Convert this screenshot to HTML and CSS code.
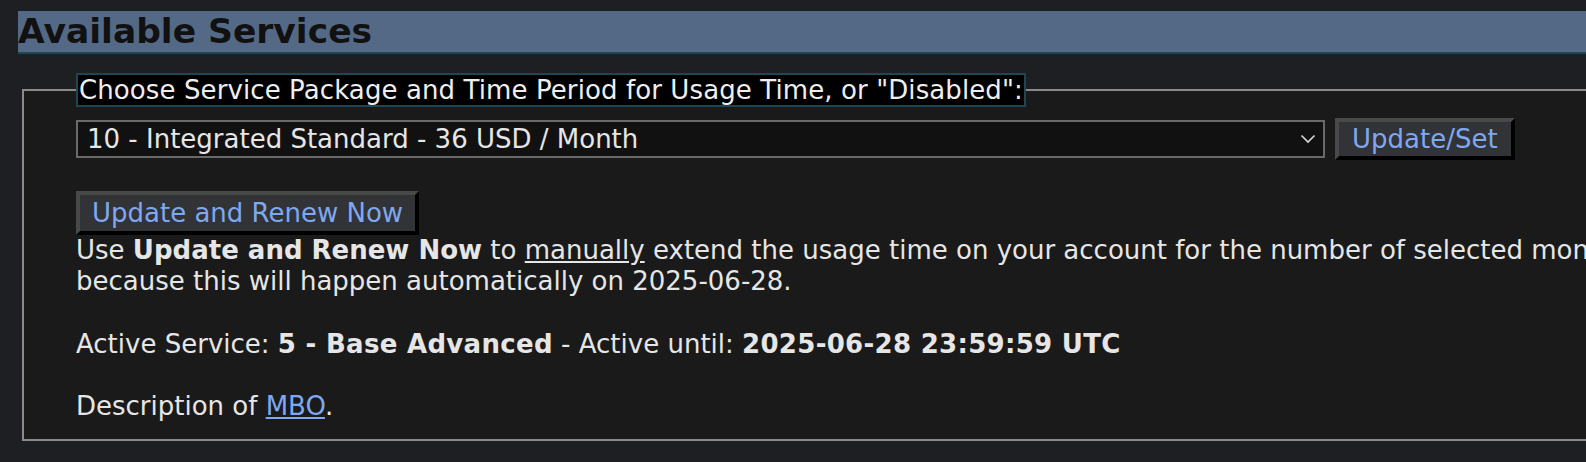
FILE: index.html
```html
<!DOCTYPE html>
<html lang="en">
<head>
  <meta charset="UTF-8">
  <title>Available Services</title>
  <link rel="stylesheet" href="styles.css">
</head>
<body>
  <div id="servicesContainer">
    <h2 class="section-title">Available Services</h2>
    <fieldset class="service-box">
      <legend>Choose Service Package and Time Period for Usage Time, or "Disabled":</legend>
      <form class="select-row">
        <div class="select-wrap">
          <select class="package-select" name="package">
            <option>10 - Integrated Standard - 36 USD / Month</option>
          </select>
          <svg class="chevron" width="16" height="10" viewBox="0 0 16 10">
            <path d="M1.5 1.5 L8 8 L14.5 1.5" fill="none" stroke="#d8d8d8" stroke-width="1.6"/>
          </svg>
        </div>
        <button type="button" class="btn">Update/Set</button>
      </form>
      <button type="button" class="btn renew-btn">Update and Renew Now</button>
      <p class="info">
        Use <b>Update and Renew Now</b> to <u>manually</u> extend the usage time on your account for the number of selected months now. Usually you do not need to do this,<br>
        because this will happen automatically on 2025-06-28.<br>
        <br>
        Active Service: <b class="wide">5 - Base Advanced</b> - Active until: <b class="wide">2025-06-28 23:59:59 UTC</b><br>
        <br>
        Description of <a href="#">MBO</a>.
      </p>
    </fieldset>
  </div>
</body>
</html>
```

FILE: styles.css
```css
body {
  font-family: "DejaVu Sans", Verdana, sans-serif;
  background-color: #1e1f23;
  color: #e6e6e6;
  margin: 0;
  padding: 11px 0 0 18px;
  overflow: hidden;
}

#servicesContainer {
  width: 2200px;
}

.section-title {
  margin: 0;
  background-color: #536985;
  border-bottom: 2px solid #1f4753;
  color: #111;
  font-size: 34.5px;
  line-height: 41px;
  font-weight: bold;
}

.service-box {
  margin: 19px 0 0 4px;
  padding: 11px 52px 16px 52px;
  border: 2px solid #8a8a8a;
  background-color: #1a1a1a;
}

.service-box legend {
  background-color: #000;
  border: 2px solid #1f4753;
  color: #eee;
  font-size: 26px;
  line-height: 30px;
  letter-spacing: 0.1px;
  padding: 0 1px;
}

.select-row {
  display: flex;
  align-items: center;
  gap: 10px;
  margin: 0;
}

.select-wrap {
  position: relative;
  width: 1249px;
}

.package-select {
  appearance: none;
  width: 100%;
  height: 38px;
  padding: 0 9px;
  background-color: #111;
  color: #e6e6e6;
  border: 2px solid #6a6a6a;
  border-radius: 0;
  font-family: inherit;
  font-size: 26px;
}

.chevron {
  position: absolute;
  right: 9px;
  top: 14px;
}

.btn {
  background-color: #323337;
  color: #7ea8ef;
  font-family: inherit;
  font-size: 26px;
  height: 42px;
  padding: 0 13px;
  border: 4px solid;
  border-color: #494949 #000 #000 #494949;
  cursor: pointer;
}

.renew-btn {
  display: block;
  margin-top: 31px;
  height: 44px;
  padding: 0 12px;
}

.info {
  margin: 0;
  font-size: 26px;
  line-height: 31.3px;
  white-space: nowrap;
}

.info b.wide {
  letter-spacing: 0.3px;
}

.info a {
  color: #7ea8ef;
}
```
